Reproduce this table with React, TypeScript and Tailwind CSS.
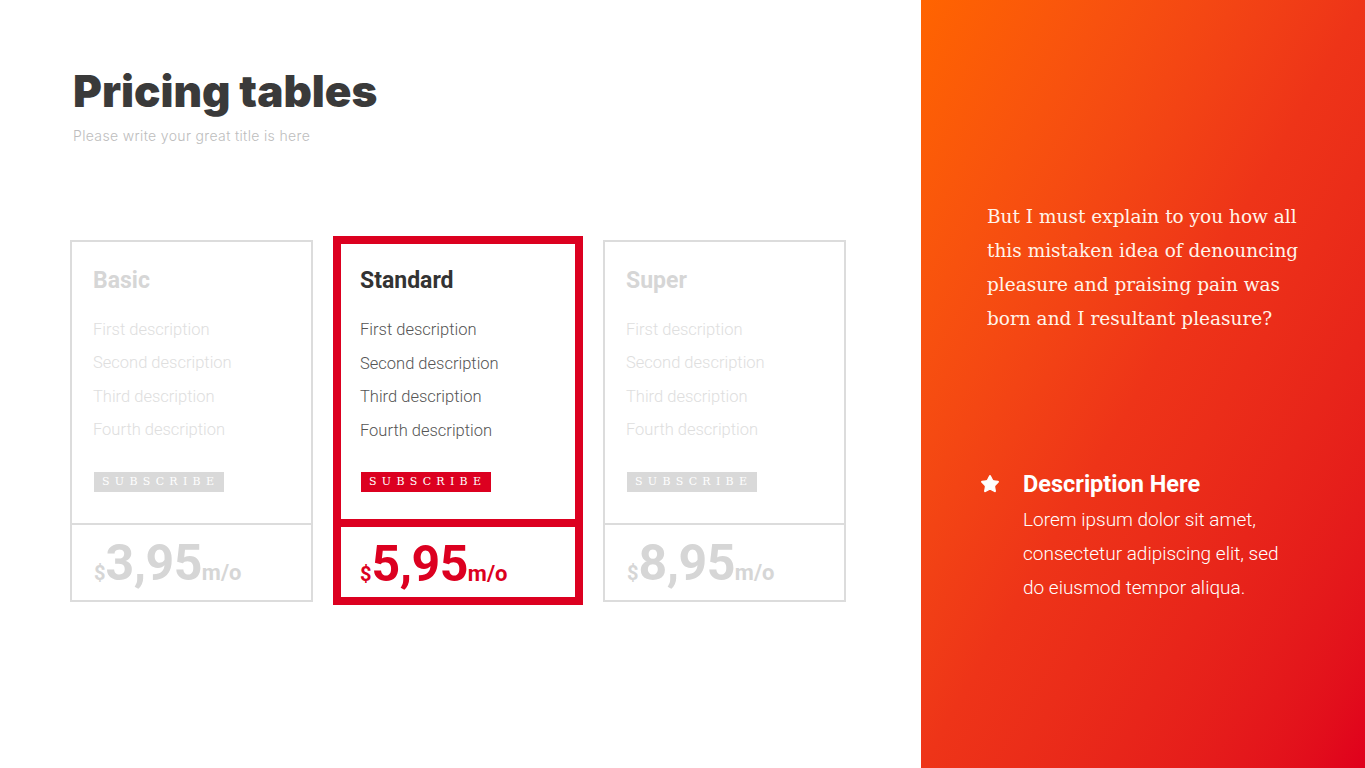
import { Star } from 'lucide-react';

type Plan = {
  name: string;
  price: string;
  active?: boolean;
};

const plans: Plan[] = [
  { name: 'Basic', price: '3,95' },
  { name: 'Standard', price: '5,95', active: true },
  { name: 'Super', price: '8,95' },
];

const features = ['First description', 'Second description', 'Third description', 'Fourth description'];

const PriceCard = ({ plan }: { plan: Plan }) => {
  const on = plan.active;
  return (
    <div
      className={
        on
          ? 'w-[250px] h-[369px] border-[8px] border-[#dc0020] flex flex-col bg-white'
          : 'w-[243px] h-[362px] border-2 border-[#dcdcdc] flex flex-col bg-white'
      }
    >
      {/* Top part */}
      <div className={on ? 'h-[275px] pl-[19px] pt-[23px]' : 'h-[281px] pl-[21px] pt-[25px]'}>
        <h3
          className={
            on
              ? 'text-[23px] leading-[28px] font-bold text-[#333333]'
              : 'text-[23px] leading-[28px] font-bold text-[#d6d6d6]'
          }
        >
          {plan.name}
        </h3>
        <ul className="mt-[18px]">
          {features.map((f) => (
            <li
              key={f}
              className={
                on
                  ? 'text-[16.5px] leading-[33.5px] font-light text-[#555555]'
                  : 'text-[16.5px] leading-[33.5px] font-light text-[#dedede]'
              }
            >
              {f}
            </li>
          ))}
        </ul>
        <button
          className={
            on
              ? 'mt-[25px] ml-px w-[130px] h-[20px] bg-[#dc0020] text-white text-[11px] tracking-[5.3px] pl-[8px] text-left font-["DejaVu_Serif",serif] leading-[20px]'
              : 'mt-[25px] ml-px w-[130px] h-[20px] bg-[#d9d9d9] text-white text-[11px] tracking-[5.3px] pl-[8px] text-left font-["DejaVu_Serif",serif] leading-[20px]'
          }
        >
          SUBSCRIBE
        </button>
      </div>

      {/* Divider */}
      <div className={on ? 'h-[8px] bg-[#dc0020]' : 'h-[2px] bg-[#dcdcdc]'} />

      {/* Price */}
      <div
        className={
          on
            ? 'flex-1 flex items-baseline pl-[19px] pt-[12px] font-bold text-[#dc0020]'
            : 'flex-1 flex items-baseline pl-[22px] pt-[13px] font-bold text-[#d6d6d6]'
        }
      >
        <span className="text-[20px] leading-none">$</span>
        <span className="text-[50px] leading-none tracking-[-0.5px]">{plan.price}</span>
        <span className="text-[22px] leading-none">m/o</span>
      </div>
    </div>
  );
};

export default function App() {
  return (
    <div className="w-[1365px] h-[768px] flex bg-white overflow-hidden font-['Roboto',sans-serif]">
      {/* Left side */}
      <div className="w-[921px] h-full flex flex-col">
        <div className="pl-[73px] pt-[65px]">
          <h1 className="font-['Inter',sans-serif] text-[44px] leading-[52px] font-black text-[#3a3a3a]">
            Pricing tables
          </h1>
          <p className="mt-[9px] font-['Inter',sans-serif] text-[14px] leading-[20px] font-light tracking-[0.35px] text-[#bdbdbd]">
            Please write your great title is here
          </p>
        </div>

        <div className="mt-[90px] pl-[70px] flex items-center gap-[20px]">
          {plans.map((p) => (
            <PriceCard key={p.name} plan={p} />
          ))}
        </div>
      </div>

      {/* Right side */}
      <div className="w-[444px] h-full bg-gradient-to-br from-[#ff6400] via-[#ee3418] to-[#e0001c] flex flex-col">
        <p className="pl-[66px] pr-[58px] pt-[200px] font-['DejaVu_Serif',serif] text-[18.5px] leading-[34px] text-[#fff4ea]">
          But I must explain to you how all this mistaken idea of denouncing pleasure and praising pain was born and
          I resultant pleasure?
        </p>

        <div className="mt-[133px] pl-[59px] flex gap-[23px]">
          <div className="w-[20px] pt-[5px]">
            <Star className="w-[20px] h-[20px] text-white fill-white" strokeWidth={1.5} />
          </div>
          <div>
            <h4 className="text-[23.5px] leading-[30px] font-bold text-white">Description Here</h4>
            <p className="mt-[4px] text-[19px] leading-[34px] font-light text-white w-[270px]">
              Lorem ipsum dolor sit amet, consectetur adipiscing elit, sed do eiusmod tempor aliqua.
            </p>
          </div>
        </div>
      </div>
    </div>
  );
}
